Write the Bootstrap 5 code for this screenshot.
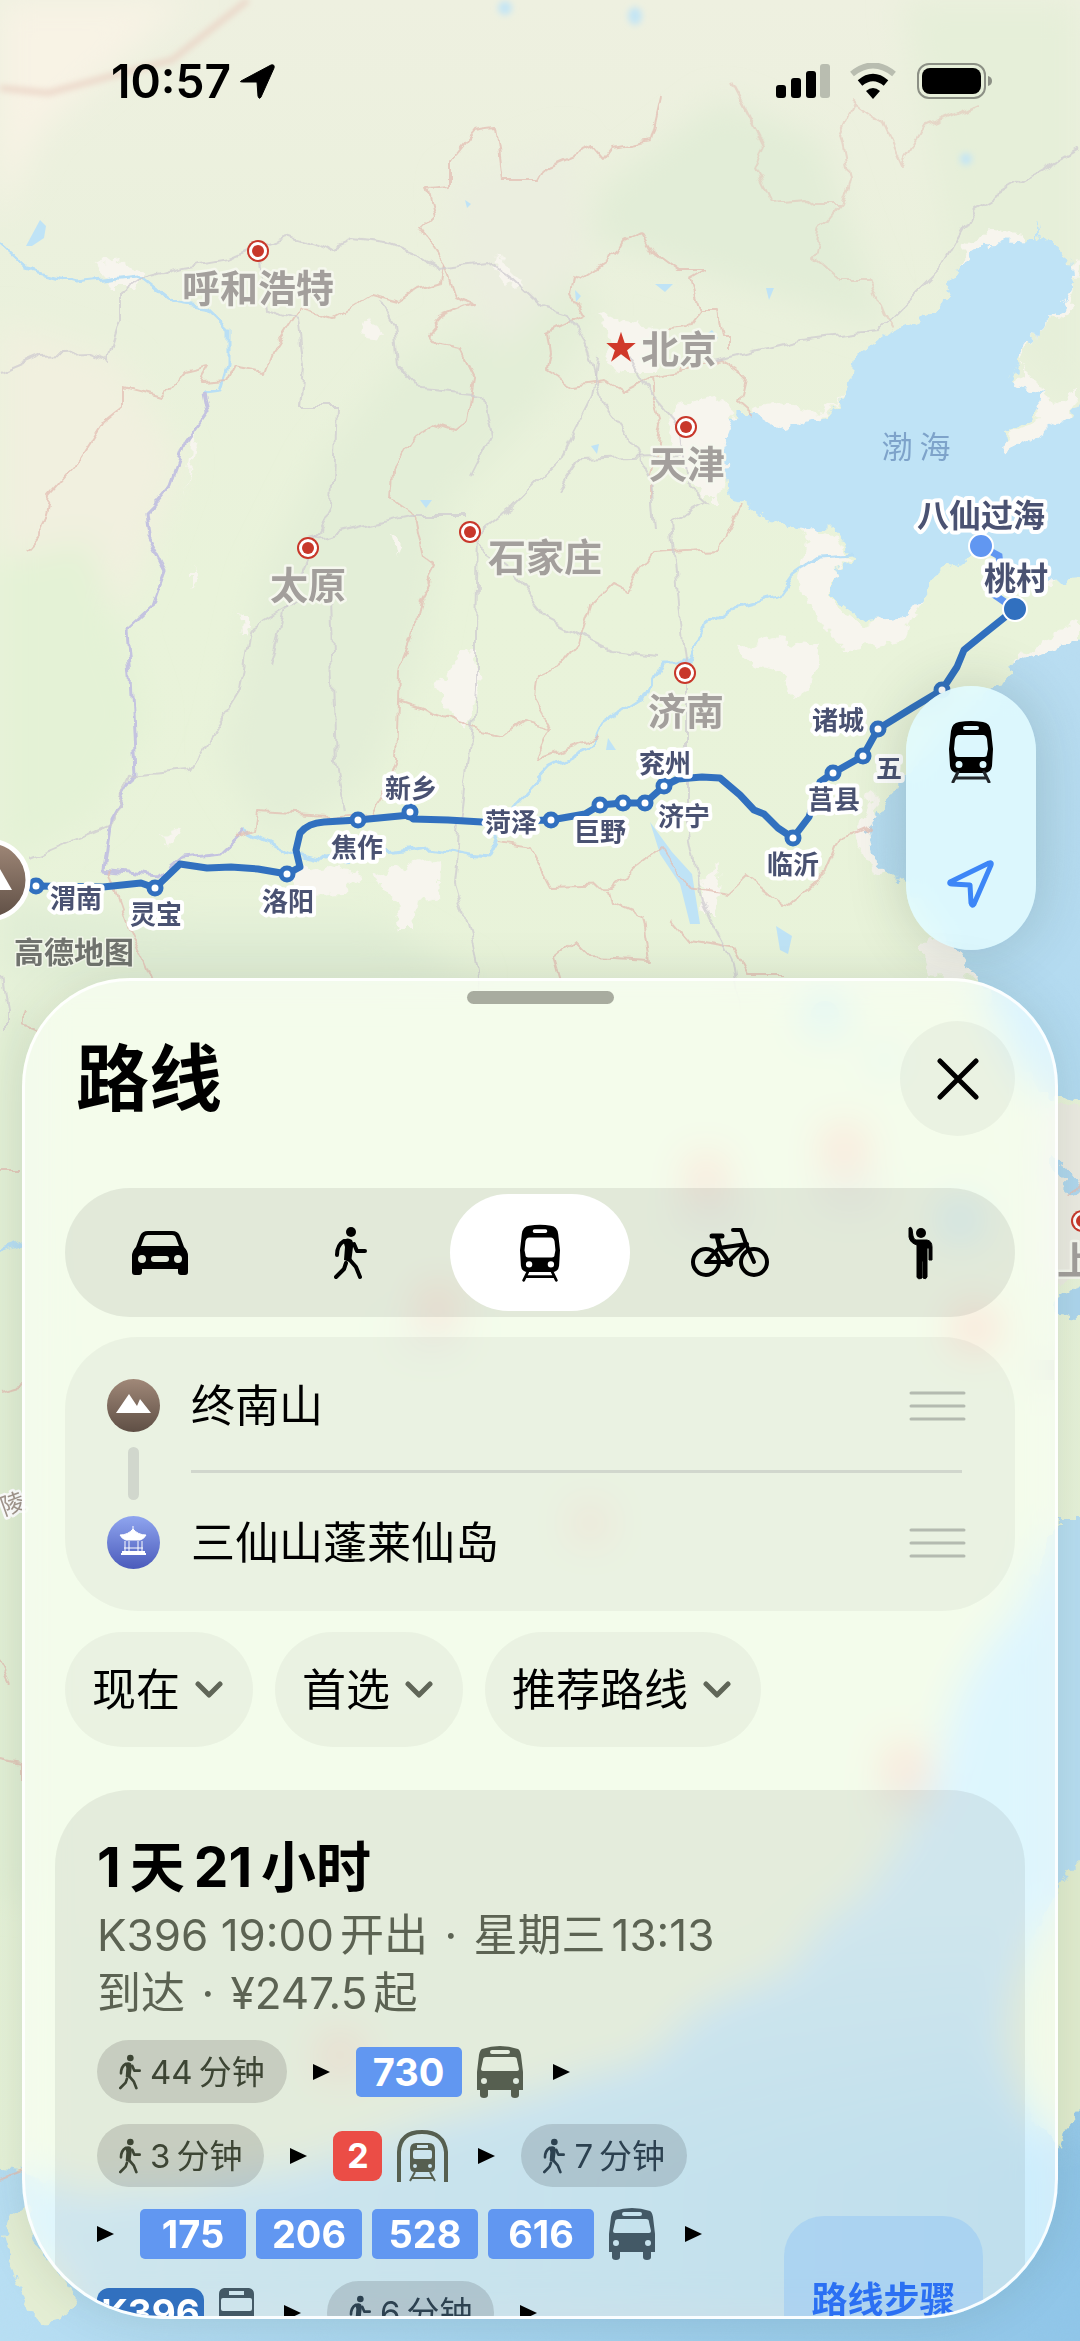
<!DOCTYPE html>
<html lang="zh-CN">
<head>
<meta charset="utf-8">
<meta name="viewport" content="width=device-width, initial-scale=1">
<title>路线</title>
<link href="https://cdn.jsdelivr.net/npm/bootstrap@5.3.0/dist/css/bootstrap.min.css" rel="stylesheet">
<style>
:root{--ink:#000;--blue:#2b70f3}
body{font-family:Inter,"Noto Sans CJK SC",sans-serif;color:var(--ink);background:#e9f3dc;margin:0}
.phone{height:100vh;min-height:1800px}
.map-canvas{position:absolute;left:0;top:0;width:100%;height:100%}
.map-canvas text{font-family:"Noto Sans CJK SC",sans-serif;text-anchor:middle;dominant-baseline:central;paint-order:stroke;stroke-linejoin:round}
.city{font-size:38px;font-weight:700;fill:#a39f9c;stroke:#f5f7ee;stroke-width:5px}
.stop{font-size:26px;font-weight:700;fill:#4a5272;stroke:#fff;stroke-width:8px}
.stop-end{font-size:32px}
.statusbar{padding:54px 88px 0 111px}
.clock{font-size:46px;line-height:54px;font-weight:600}
.map-tools{width:130px;height:264px;border-radius:65px;margin:0 44px 28px auto;background:rgba(226,252,255,.86);backdrop-filter:blur(14px);box-shadow:0 0 60px rgba(30,60,40,.2)}
.map-tools .btn{flex:1 1 0;padding:0;border:0}
.sheet{height:calc(100vh - 1000px);margin:0 22px 22px;padding:10px 40px 0;border:3px solid rgba(255,255,255,.85);border-radius:108px 108px 140px 140px;background:rgba(252,255,252,.66);backdrop-filter:blur(20px) saturate(1.7);box-shadow:0 0 50px rgba(30,60,40,.13);overflow:hidden}
.grabber{width:147px;height:13px;border-radius:7px;background:#a8ac9f;margin-bottom:17px}
.sheet-title{font-size:73px;line-height:100px;font-weight:700;margin:0 0 0 11px}
.close-btn{width:115px;height:115px;border-radius:50%;padding:0;background:rgba(0,0,0,.04);border:0}
.modes{height:129px;border-radius:65px;background:rgba(0,0,0,.075);padding:6px 0;margin:52px 0 20px}
.modes .btn{flex:1 1 0;border:0;border-radius:59px!important;display:flex;align-items:center;justify-content:center;color:#000;margin:0 5px!important;padding:0}
.modes .btn-check:checked+.btn{background:#fff;color:#000}
.soft-card{background:rgba(0,0,0,.04);border-radius:72px;padding:0 49px 0 42px}
.place-row{height:137px}
.place-row .pin{width:53px;height:53px;margin-right:31px}
.place-name{font-size:44px;line-height:60px}
.rail{width:11px;height:53px;border-radius:6px;background:#d1d7cd;left:63px;top:110px}
.rule{height:3px;background:#d1d7cd;left:126px;right:53px;top:133px}
.pill-select{width:auto;height:115px;border:0;border-radius:58px;font-size:44px;line-height:60px;color:#000;padding:0 73px 0 27px;background-color:rgba(0,0,0,.04);background-image:url("data:image/svg+xml,%3Csvg xmlns='http://www.w3.org/2000/svg' viewBox='0 0 28 18'%3E%3Cpath d='M3 3l11 11L25 3' fill='none' stroke='%23606658' stroke-width='5' stroke-linecap='round' stroke-linejoin='round'/%3E%3C/svg%3E");background-size:28px 18px;background-position:right 30px center;background-repeat:no-repeat}
.pills{gap:22px;margin-top:21px}
.trip{margin:43px -10px 0;height:760px;border-radius:76px;background:rgba(0,0,0,.062);padding:42px 42px 0}
.trip-title{font-size:55px;line-height:70px;font-weight:700;margin:0}
.trip-title .n{margin-right:9px}.trip-title .m{margin:0 9px}
.trip-sub{font-size:44px;line-height:58px;color:#5c6353;margin:4px 0 18px}
.trip-sub .n{margin-right:6px}.trip-sub .m{margin-left:6px}.trip-sub .dot{margin:0 4px}
.legs{width:620px;column-gap:26px;row-gap:21px}
.walk{height:63px;border-radius:32px;background:rgba(0,0,0,.13);padding:0 22px;font-size:33px;line-height:48px;color:#3d4534;gap:9px}
.walk .n{margin-right:6px}
.walk.sea{color:#2c4150}
.ride{gap:15px;color:#565f50;margin-right:4px}
.ride.sea{color:#435966}
.lines{gap:10px}
.line-tag{height:50px;width:106px;border-radius:5px;background:#6197f1;color:#fff;font-size:38px;line-height:50px;font-weight:700;text-align:center}
.metro{width:49px;border-radius:9px;background:#eb4d46;font-size:34px}
.rail-tag{width:107px;border-radius:12px;background:#3170bf;font-size:37px}
.steps-btn{width:199px;height:168px;border:0;border-radius:40px;background:rgba(110,180,250,.28);color:var(--blue);font-size:36px;font-weight:700;padding:0;margin-top:384px}
</style>
<script src="https://cdn.jsdelivr.net/npm/bootstrap@5.3.0/dist/js/bootstrap.bundle.min.js"></script>
</head>
<body>
<!-- shared icons -->
<svg width="0" height="0" class="position-absolute" aria-hidden="true">
  <symbol id="i-walk" viewBox="0 0 33 52"><circle cx="17" cy="5" r="5"/><path d="M9 13q5-3 9 0 2 3 1 7l-1 8q0 4-2 7l-6-2 1-13z"/><path d="M10 14q-7 4-7 14M20 17l3 7h8M12 36l-2 6-8 8M15 32l7 8 4 10" fill="none" stroke="currentColor" stroke-width="4" stroke-linecap="round" stroke-linejoin="round"/></symbol>
  <symbol id="i-train" viewBox="0 0 44 62"><path fill-rule="evenodd" d="M10 1Q22-1 34 1q7 1 8 9l2 18-1 17q-1 7-8 7H9q-7 0-8-7L0 28 2 10q1-8 8-9zM16 5q-2 0-2 2t2 2h12q2 0 2-2t-2-2zM10 14q-3 0-4 4L5 28l1 5q0 3 3 3h26q3 0 3-3l1-5-1-10q-1-4-4-4zM10 40a3.500 3.500 0 1 0 0 7 3.500 3.500 0 0 0 0-7zM34 40a3.500 3.500 0 1 0 0 7 3.500 3.500 0 0 0 0-7z"/><path d="M9 51L4 61M35 51l5 10M7 57h30" fill="none" stroke="currentColor" stroke-width="3" stroke-linecap="round"/></symbol>
  <symbol id="i-bus" viewBox="0 0 46 52"><path fill-rule="evenodd" d="M5 3Q23-3 41 3q2 1 3 6l2 17v18h-4v5q0 3-4 3t-4-3v-5H11v5q0 3-4 3t-4-3v-5H0V26L2 9q1-5 3-6zM15 4q-2 0-2 2t2 2h16q2 0 2-2t-2-2zM9 11q-3 0-3 3L4 23q0 2 2 2h34q2 0 2-2l-2-9q0-3-3-3zM7 32a3 3 0 1 0 0 6 3 3 0 0 0 0-6zM39 32a3 3 0 1 0 0 6 3 3 0 0 0 0-6z"/></symbol>
  <symbol id="i-tunnel" viewBox="0 0 51 52"><path d="M2 52V22Q3 2 25 2t24 20v30" fill="none" stroke="currentColor" stroke-width="4"/><path fill-rule="evenodd" d="M19 13h13q6 0 6 7v17q0 5-5 5H18q-5 0-5-5V20q0-7 6-7zM20 15v3h11v-3zM18 20q-2 0-2 2v5q0 2 2 2h15q2 0 2-2v-5q0-2-2-2zM18 34a2 2 0 1 0 0 4 2 2 0 0 0 0-4zM33 34a2 2 0 1 0 0 4 2 2 0 0 0 0-4z"/><path d="M18 42l-5 9M33 42l5 9M15 48h21" fill="none" stroke="currentColor" stroke-width="2"/></symbol>
  <symbol id="i-rail" viewBox="0 0 35 50"><path fill-rule="evenodd" d="M5 0h25q5 1 5 6v30q0 5-5 5H5q-5 0-5-5V6q0-5 5-6zM10 3v4h15V3zM4 10q-2 0-2 2v9q0 2 2 2h27q2 0 2-2v-9q0-2-2-2zM8 30a3 3 0 1 0 0 6 3 3 0 0 0 0-6zM27 30a3 3 0 1 0 0 6 3 3 0 0 0 0-6z"/></symbol>
  <symbol id="i-play" viewBox="0 0 17 16"><path d="M0 0l17 8-17 8z"/></symbol>
  <symbol id="i-drag" viewBox="0 0 57 30"><path d="M2 2h53M2 15h53M2 28h53" fill="none" stroke="#b4bab0" stroke-width="3" stroke-linecap="round"/></symbol>
</svg>

<main class="phone position-relative overflow-hidden d-flex flex-column">
<svg class="map-canvas" viewBox="0 0 1080 2341" preserveAspectRatio="xMidYMin slice" role="img" aria-label="地图">
  <defs>
    <linearGradient id="land" x1="0" y1="0" x2="0" y2="1"><stop offset="0" stop-color="#eef0e0"/><stop offset=".14" stop-color="#eaf1dc"/><stop offset=".25" stop-color="#e9f3da"/><stop offset="1" stop-color="#e6f2d8"/></linearGradient>
    <linearGradient id="deep" x1="0" y1="0" x2="0" y2="1"><stop offset="0" stop-color="#b9ddf1"/><stop offset="1" stop-color="#b2daf0"/></linearGradient>
    <linearGradient id="sea2" x1="0" y1="1" x2="1" y2="1"><stop offset="0" stop-color="#b9dff3"/><stop offset="1" stop-color="#8fc5e8"/></linearGradient>
    <linearGradient id="sea3" x1="0" y1="0" x2="0" y2="1"><stop offset="0" stop-color="#b8def2"/><stop offset=".6" stop-color="#b8def2"/><stop offset="1" stop-color="#b8def2" stop-opacity="0"/></linearGradient>
    <linearGradient id="brown" x1="0" y1="0" x2="0" y2="1"><stop offset="0" stop-color="#a08878"/><stop offset="1" stop-color="#5f4f45"/></linearGradient>
    <filter id="soft" x="-20%" y="-20%" width="140%" height="140%"><feGaussianBlur stdDeviation="16"/></filter>
    <filter id="haze" x="-20%" y="-20%" width="140%" height="140%"><feGaussianBlur stdDeviation="3"/></filter>
    <filter id="coast" x="-5%" y="-5%" width="110%" height="110%"><feTurbulence type="fractalNoise" baseFrequency=".07" numOctaves="3" seed="4"/><feDisplacementMap in="SourceGraphic" scale="18" xChannelSelector="R" yChannelSelector="G"/></filter>
    <filter id="wiggle" x="-5%" y="-5%" width="110%" height="110%"><feTurbulence type="fractalNoise" baseFrequency=".05" numOctaves="2" seed="9"/><feDisplacementMap in="SourceGraphic" scale="14" xChannelSelector="R" yChannelSelector="G"/></filter>
    <g id="cap"><circle r="11" fill="#c8372a"/><circle r="9" fill="#fff"/><circle r="6" fill="#c8372a"/></g>
    <g id="st"><circle r="6" fill="#fff" stroke="#3170bf" stroke-width="5"/></g>
  </defs>
  <rect width="1080" height="2341" fill="url(#land)"/>
  <!-- relief -->
  <g filter="url(#soft)">
    <path d="M0 0h190L40 130 0 220z" fill="#f8f3e5"/>
    <path d="M0 320l120 40 60 100-40 110-60 140-80 0z" fill="#f1f0df"/>
    <path d="M600 190l120-90 100 40 30 90 40 100-130-40-100-30-70-20z" fill="#e2edd7"/>
    <path d="M560 250l40 60-60 100-90 90-30 160-50 120-100 60-50-80 40-180 60-120 80-100 90-40z" fill="#e3eed7"/>
    <path d="M0 560l90-20 60 180-50 90-100 60z" fill="#e4f2d6"/>
    <path d="M0 900l180 20 200 0 100 60H0z" fill="#e0edd5"/>
    <path d="M0 1000h30v900H0z" fill="#dfedd3"/>
    <path d="M900 0h180v420l-120-120z" fill="#e6efd9"/>
    <path d="M450 180l120-40 20 120-90 90-40-60z" fill="#ebeedf"/>
  </g>
  <g fill="#f7f5ee" filter="url(#coast)">
    <path d="M92 262l30-4 22 16-8 14-22 0zM598 312l20 10 30 6 22 20-12 24-40 0-14-10 8-24zM370 316l14 22-20-2zM498 252l8 18 16 16-10 2-16-20zM720 396l-44 8-8 30 16 30 22 36 14 0 10-40 20-20z"/>
    <path d="M436 690l24-36 14-4 6 50-16 32-14-20zM374 878l50-20 16 10-2 30-20 6-6 28-12 0-4-30zM290 872l40-6 30 6-20 22-40 4zM736 650l40-12 46 10-6 30-24 18-14-26-30-6zM240 614l10 10-6 12zM394 536l8 8-4 12zM192 568l6 10-6 10zM160 835l18-6-8 20zM700 880l20-14-4 50-12 0zM186 494l8-60 4 2z"/>
    <path d="M744 500l70 24 24 14 14 22-20 14 0 30 28 22 30-6 20-20 12-34 14-10-14 40-16 44-60 10-20-22-30-50 14-40-30-26-40-10z"/>
    <path d="M1080 570l-38 14-20-10 10 20zM1080 620l-60 34-16 38 30-20 46-24zM874 790l-20 46 22 40 10-4-8-40zM920 944l40-20 26 40-10 14-50-4z"/>
    <path d="M964 248l24-16 36 4-6 12-36-2-22 42zM850 390l-30 24-50-10-20 6 36 24 30-10z"/>
    <path d="M1080 250l-12 60-46 36 0 30-16 10 20 12 14 20-30 14-10 34 14 6 40-40 26-30 0-12-30 16-10-20-20-20 14-40 24-30z"/>
  </g>
  <!-- sea -->
  <g filter="url(#coast)">
  <path fill="#bfe3f6" d="M730 500l-7-50 14-37 20 0 28 17 41-12 24-28 4-33 34-24 52-23 10-30 21-27 17-11 31 1 19-8 0-16 3 18 30 23 3 23-20 37-28 23-7 20-10 20 34 10-10 24-28 16 4 20 31-20 60-36V577l-67 6-48-36-21 13-24 10-17 27-21 23-38 3-31-23 0-27 24-13-24-33-27 3-42-10-20-17z"/>
  <path fill="url(#deep)" d="M1100 632l-81 28-20 27-35 20-62 73-34 50 7 33 27 20 50 60 26 37 60 113 62 14z"/>
  <path fill="#aed6ee" d="M1056 1296l44-14v38l-42-6z"/>
  <path fill="#ecebe2" d="M1040 1100l60 17v150l-60 20z"/>
  <path fill="#b0d7ee" d="M1050 1155l14 10 16 24 20 0v16l-30-14-20-24z"/>
  <path fill="url(#sea2)" d="M1100 1520l-40 0-40 90-60 80-30 110-60 90-40 30-40 50-90 40-50 50-170 50-180 60-120 20-60 0-30 10-70-30-60-6v197h1140z"/>
  <path fill="url(#sea3)" d="M1100 1520l-40 0-40 90-60 80-30 110-60 90-40 30-40 50-90 40-50 50-170 50-180 60h800z"/>
  <path fill="#e4eed4" d="M24 2205l-14 11-8 22 18 54 21 32 24-7 14-18-27-36-18-21-4-28z"/>
  <path fill="#e2edcf" d="M1100 1840l-38 40-30 60-22 50-6 60 16 50 40 50 4-20 16-18 20-20z"/>
  </g>
  <path fill="#bfe3f6" d="M40 220l6 6-2 12-12 8-6 0zM465 200l6 4-4 4zM655 284l18 0-8 8zM575 290l6 6-5 6zM704 336l8-6 6 8-8 6zM766 288l8 0-5 12zM591 446l8-2-2 10zM420 500l12 0-6 8zM608 738l8 12-10 0zM650 822l22 30 20 22 8 50-10 0-10-40-20-30zM776 926l16 10-4 18-8-4z"/>
  <g fill="#c4e5f4" filter="url(#haze)"><circle cx="505" cy="8" r="7"/><ellipse cx="635" cy="16" rx="7" ry="9"/><circle cx="966" cy="159" r="6"/></g>
  <!-- rivers -->
  <g fill="none" stroke="#b9dff5" stroke-width="3" stroke-linejoin="round" filter="url(#wiggle)">
    <path d="M0 245l28 25 48 12 62-7 34 27 35 6 20 19v40l-7 23-17 2"/>
    <path d="M244 830l38 20 42 10 69-7 34-5 59 9 27-50 38-40 41-20 11-24 41-26 17-34 28 0 13-33 28-20 48-13 14-20 28-20 34-2"/>
    <path d="M0 1250l24-8"/>
  </g>
  <path d="M203 392l4 21-21 30-14 40-14 17-13 13 3 24 17 33-13 37-25 23 4 47 5 96-26 47-7 50 55 7 24-20 38-4 24-23" fill="none" stroke="#c4c3e0" stroke-width="3" filter="url(#wiggle)"/>
  <!-- provincial borders -->
  <path filter="url(#haze)" d="M248 0l-76 60-124 33-48-5" fill="none" stroke="#ead2c4" stroke-width="5"/>
  <g fill="none" stroke="#e3bdb3" stroke-width="2" stroke-opacity=".75" stroke-linejoin="round" filter="url(#wiggle)">
    <path d="M730 80l17 33 17 34-10 20 17 36 35-3 7 5h27l-20 25-7 27 27 23h28l14 33 12 19M840 205l9-28-9-44 14-30 28 20 19 42 22-38 55-24" stroke-opacity=".5"/>
    <path d="M661 97l-10 43-38 7-10 13-11-13-48 20-7 13h-34l-7-53-21 3-24 30v28l-24 2 7 27-14 13 24 33 11 34 17 8-31 12-14 16 10 12 23 5 15 30-7 40-13 10-21-7-21 14-20 33-2 30 24 17 9 40 13 10-17 33-7 37-14 36-1 27-2 60-10 30-14 23-41 4-73-4-3 17-21 7"/>
    <path d="M640 232l11 18 27 20h28l-17 10 10 33-10 14-28 3M699 313h18l4 24h8v12M640 232l-17 8-7 13-41 27-3 13 13 22-37 18 3 20-3 17 24 15 34-5 17 12 28-15 31-5 4-25M651 377l2 24 9 26-10 50 0 24M682 372l40-12 22 16-6 26 16 14"/>
    <path d="M444 263l-3 20-24 7-18 12-27-7-21 13-17 10-34-10-25 39-10 26-31-6-7 13-24 2-2 0 8-14-25 6-22 25-14-4-24-6 0 18-20 16-24 38-30 34-10 40-14 16"/>
    <path d="M744 503l-24 45-66 4-27 38-14-7-21 20-13 40-14 17-28 13-3 24 17 30-28-7-20 15-28-7-48-18-28-10M551 727l-14 33 62-23"/>
    <path d="M496 842l34 5 21 40 62-2 48-38 28 40 41 6 17-16 38 30 41-34 14-33 31-13M610 887l3 16 31 14 7 43-59-3-17-17-21 17 7 24M672 920l17 20 44 7 14 26h38M110 870l20 60 14 30 8 20M0 1170h22M28 1010l-5 14 14 6M1080 1180l-10 16"/>
    <path d="M0 1390l22-6M0 1660l10 20M0 1758l22 4v20M0 2180l22-8"/>
  </g>
  <!-- trunk roads -->
  <g fill="none" stroke="#cfcbd0" stroke-width="2" stroke-opacity=".75" filter="url(#wiggle)">
    <path d="M0 372l40-17 48-2 20 8 12-40 0-28 20-14 42-12 48-8 28-12 30-9 36 12 28-12 34 4 30 12 22 14 50-6 24 16 30 28 26 8 20 34 14 54 26 34 24 44 4 50M258 250l10 58 30 10 6 50-4 38 36 0-4 100-20 40-26 60-16 60M710 362l90-22 80-10 60-60 34-60 50-30 56-30"/>
    <path d="M598 357l-6 40-30 60-50 50-34 26-2 100 0 60-16 130-6 60 18 60 10 60M621 347l24 40 34 40 8 60 18 16-34 20 16 160 0 140 16 80 30 60 10 60M470 540l40 30 40 50 60 30 50 5M308 540l100-24 60 0M300 600l-50 30-10 60-50 80-60 6-20 50-80 34M330 600l6 160 10 50M560 490l20-30 100-4M0 970l6 40v20M380 300l14 24 4 40 24 26 60 6 8 40-20 40"/>
  </g>
  <!-- cities -->
  <g class="city" transform="translate(0 -3)">
    <text x="258" y="288">呼和浩特</text><text x="679" y="349">北京</text><text x="687" y="464">天津</text>
    <text x="308" y="585">太原</text><text x="545" y="557">石家庄</text><text x="686" y="711">济南</text><text x="1076" y="1260">上</text>
    <g font-size="31" fill="#7ea3ca" stroke="none"><text x="897" y="447" style="font-weight:400">渤</text><text x="935" y="447" style="font-weight:400">海</text></g>
  </g>
  <text x="12" y="1502" font-size="24" fill="#a3968e" stroke="#fff" stroke-width="5" transform="rotate(-20 12 1502)">陵</text>
  <use href="#cap" x="258" y="251"/><use href="#cap" x="686" y="427"/><use href="#cap" x="308" y="548"/><use href="#cap" x="470" y="532"/><use href="#cap" x="685" y="673"/><use href="#cap" x="1082" y="1221"/>
  <path d="M621 335l3 9h9l-7 6 3 9-8-6-8 6 3-9-7-6h9z" fill="#d0392a" stroke="#d0392a" stroke-width="2"/>
  <g fill="#e07a70" fill-opacity=".6"><circle cx="706" cy="1175" r="18"/><circle cx="844" cy="1148" r="20"/><circle cx="438" cy="1305" r="18"/><circle cx="975" cy="1328" r="22"/><circle cx="905" cy="1765" r="20"/><circle cx="340" cy="2055" r="18"/><circle cx="590" cy="1523" r="14"/></g>
  <g fill="#b4aeb2" fill-opacity=".55"><path d="M680 1200h64v24h-64zM820 1180h60v24h-60zM880 1785h60v24h-60zM400 1330h60v16h-60zM1030 1360h24v20h-24z"/></g>
  <g fill="#8cc8ef"><circle cx="825" cy="1015" r="14"/><circle cx="885" cy="1060" r="8"/><circle cx="960" cy="1220" r="16"/></g>
  <!-- itinerary -->
  <path d="M981 546l18 10 2 18-8 20 22 15" fill="none" stroke="#6197f1" stroke-width="7"/>
  <path d="M36 886l67 1 38-4 14 5 25-24 27 4 24-1 27 2 29 5 13-7-4-17 4-17q8-10 24-11l34-2 52-5 3 4 35 1 34 2 69-2 34-6 15-9 23-2h22l19-17 14-7 24-2 18 1 20 17 14 15 10 4 14 14 15 10 16-21 11-35 13-9 30-17 15-27 34-21 30-18 15-23 7-17 21-17 30-24" fill="none" stroke="#3170bf" stroke-width="7" stroke-linejoin="round"/>
  <use href="#st" x="36" y="886"/><use href="#st" x="155" y="888"/><use href="#st" x="287" y="874"/><use href="#st" x="358" y="820"/><use href="#st" x="410" y="812"/><use href="#st" x="551" y="820"/><use href="#st" x="600" y="805"/><use href="#st" x="623" y="803"/><use href="#st" x="645" y="803"/><use href="#st" x="664" y="786"/><use href="#st" x="793" y="838"/><use href="#st" x="833" y="773"/><use href="#st" x="863" y="756"/><use href="#st" x="878" y="729"/><use href="#st" x="942" y="690"/>
  <g class="stop" transform="translate(0 -2)">
    <text x="76" y="898">渭南</text><text x="156" y="914">灵宝</text><text x="288" y="901">洛阳</text><text x="357" y="847">焦作</text><text x="411" y="788">新乡</text><text x="511" y="822">菏泽</text><text x="600" y="831">巨野</text><text x="684" y="816">济宁</text><text x="665" y="763">兖州</text><text x="793" y="864">临沂</text><text x="834" y="799">莒县</text><text x="889" y="768">五</text><text x="838" y="720">诸城</text>
    <text class="stop-end" x="981" y="515">八仙过海</text><text class="stop-end" x="1016" y="578">桃村</text>
  </g>
  <circle cx="981" cy="546" r="12" fill="#6197f1" stroke="#fff" stroke-width="2"/><circle cx="1015" cy="609" r="12" fill="#3170bf" stroke="#fff" stroke-width="2"/>
  <circle cx="-11" cy="880" r="39" fill="url(#brown)" stroke="#fff" stroke-width="5"/><path d="M-30 890l26-28 16 28z" fill="#fff"/>
  <text x="74" y="950" font-size="30" font-weight="700" fill="#70736e" stroke="#f2f6ea" stroke-width="3">高德地图</text>
</svg>

<header class="statusbar position-relative d-flex justify-content-between align-items-center">
  <div class="d-flex align-items-center gap-2"><span class="clock">10:57</span>
    <svg width="36" height="36" viewBox="0 0 36 36"><path d="M2 18L32 2q4-1 3 3L22 34q-2 3-3-1l-1-14H4q-4 0-2-1z" stroke="#000" stroke-linejoin="round"/></svg></div>
  <svg width="216" height="36" viewBox="0 0 216 36">
      <rect x="0" y="22" width="10" height="13" rx="3"/><rect x="15" y="15" width="10" height="20" rx="3"/><rect x="30" y="8" width="10" height="27" rx="3"/><rect x="44" y="1" width="10" height="34" rx="3" fill="#b9bdb0"/>
      <path d="M76 11q21-17 42 0" fill="none" stroke="#b9bdb0" stroke-width="6"/><path d="M84 20q13-11 26 0" fill="none" stroke="#000" stroke-width="7"/><path d="M90 28q7-6 14 0l-7 8z"/>
      <rect x="142" y="1" width="67" height="34" rx="11" fill="none" stroke="#8c9085" stroke-width="2"/><rect x="146" y="5" width="59" height="26" rx="8"/><path d="M212 13q4 1 4 5t-4 5z" fill="#8c9085"/>
  </svg>
</header>

<div class="flex-grow-1 d-flex align-items-end position-relative">
  <div class="map-tools d-flex flex-column">
    <button class="btn" type="button" aria-label="公共交通地图"><svg width="44" height="62"><use href="#i-train"/></svg></button>
    <button class="btn" type="button" aria-label="当前位置"><svg width="48" height="48" viewBox="0 0 48 48"><path d="M3 22L42 3q3-1 2 2L27 44q-2 3-3-1L23 25 5 24q-3 0-2-2z" fill="none" stroke="#3d86f7" stroke-width="5" stroke-linejoin="round"/></svg></button>
  </div>
</div>

<section class="sheet position-relative flex-shrink-0" aria-label="路线">
  <div class="grabber mx-auto"></div>
  <div class="d-flex justify-content-between align-items-center">
    <h1 class="sheet-title">路线</h1>
    <button class="btn close-btn" type="button" aria-label="关闭"><svg width="42" height="42" viewBox="0 0 42 42"><path d="M3 3l36 36M39 3L3 39" stroke="#000" stroke-width="5" stroke-linecap="round"/></svg></button>
  </div>

  <div class="modes d-flex" role="group" aria-label="出行方式">
    <input class="btn-check" type="radio" name="mode" id="m1"><label class="btn" for="m1" aria-label="驾车"><svg width="56" height="44" viewBox="0 0 56 44"><path fill-rule="evenodd" d="M16 0h24q6 0 8 5l4 11q4 4 4 9v16q0 3-3 3h-4q-3 0-3-3v-3H10v3q0 3-3 3H3q-3 0-3-3V25q0-5 4-9L8 5q2-5 8-5zM16 4q-3 0-4 3L9 15h38L44 7q-1-3-4-3zM10 24a4 4 0 1 0 0 8 4 4 0 0 0 0-8zM46 24a4 4 0 1 0 0 8 4 4 0 0 0 0-8zM22 25a3 3 0 0 0 0 6h12a3 3 0 0 0 0-6z"/></svg></label>
    <input class="btn-check" type="radio" name="mode" id="m2"><label class="btn" for="m2" aria-label="步行"><svg width="33" height="54"><use href="#i-walk"/></svg></label>
    <input class="btn-check" type="radio" name="mode" id="m3" checked><label class="btn" for="m3" aria-label="公交"><svg width="40" height="58"><use href="#i-train"/></svg></label>
    <input class="btn-check" type="radio" name="mode" id="m4"><label class="btn" for="m4" aria-label="骑行"><svg width="78" height="49" viewBox="0 0 78 49" fill="none" stroke="#000" stroke-width="4" stroke-linecap="round" stroke-linejoin="round"><circle cx="15" cy="34" r="13"/><circle cx="63" cy="34" r="13"/><path d="M15 34l13-14 28-4M15 34h22l18-18M28 20l10 14" /><path d="M21 8h10M26 8l3 12" stroke-width="5"/><path d="M42 2h8l5 14 8 18"/><circle cx="38" cy="35" r="2"/></svg></label>
    <input class="btn-check" type="radio" name="mode" id="m5"><label class="btn" for="m5" aria-label="打车"><svg width="25" height="54" viewBox="0 0 25 52"><circle cx="13" cy="6" r="5"/><path d="M8 13h11q5 1 5 7v13h-3V21l-2 0v29q-1 3-4 1V34h-1v17q-4 2-5-1V18q-7-2-8-8V1q2-2 3 1l1 7q1 4 3 4z" stroke="#000" stroke-linejoin="round"/></svg></label>
  </div>

  <div class="soft-card position-relative">
    <div class="place-row d-flex align-items-center">
      <svg class="pin" viewBox="0 0 53 53"><circle cx="26.500" cy="26.500" r="26.500" fill="url(#brown)"/><path d="M9 34l13-19 8 12 3-7 11 14z" fill="#fff"/></svg>
      <span class="place-name flex-grow-1">终南山</span><svg width="57" height="30"><use href="#i-drag"/></svg>
    </div>
    <div class="place-row d-flex align-items-center">
      <svg class="pin" viewBox="0 0 53 53"><defs><linearGradient id="indigo" x1="0" y1="0" x2="0" y2="1"><stop offset="0" stop-color="#8fa5ef"/><stop offset="1" stop-color="#4b5bbb"/></linearGradient></defs><circle cx="26.500" cy="26.500" r="26.500" fill="url(#indigo)"/><path d="M26 10v4M13 19q8 0 13-6 5 6 13 6-2 4-6 5H19q-4-1-6-5z" fill="#fff" stroke="#fff"/><path d="M18 25v10M22 25v10M31 25v10M35 25v10M17 32h19" stroke="#fff"/><path d="M15 36h23M14 38h25" stroke="#fff" stroke-width="2"/></svg>
      <span class="place-name flex-grow-1">三仙山蓬莱仙岛</span><svg width="57" height="30"><use href="#i-drag"/></svg>
    </div>
    <span class="rail position-absolute"></span><span class="rule position-absolute"></span>
  </div>

  <div class="pills d-flex">
    <select class="pill-select form-select" aria-label="时间"><option>现在</option></select>
    <select class="pill-select form-select" aria-label="偏好"><option>首选</option></select>
    <select class="pill-select form-select" aria-label="排序"><option>推荐路线</option></select>
  </div>

  <article class="trip d-flex justify-content-between align-items-start">
    <div>
      <h2 class="trip-title"><span class="n">1</span>天<span class="m">21</span>小时</h2>
      <p class="trip-sub text-nowrap">K396 <span class="n">19:00</span>开出 <span class="dot">·</span> 星期三<span class="m">13:13</span><br>到达 <span class="dot">·</span> <span class="n">¥247.5</span>起</p>
      <div class="legs d-flex flex-wrap align-items-center">
        <span class="walk d-flex align-items-center"><svg width="22" height="36" fill="currentColor"><use href="#i-walk"/></svg><span><span class="n">44</span>分钟</span></span>
        <svg width="17" height="16"><use href="#i-play"/></svg>
        <span class="ride d-flex align-items-center"><span class="line-tag">730</span><svg width="46" height="52" fill="currentColor"><use href="#i-bus"/></svg></span>
        <svg width="17" height="16"><use href="#i-play"/></svg>
        <span class="walk d-flex align-items-center"><svg width="22" height="36" fill="currentColor"><use href="#i-walk"/></svg><span><span class="n">3</span>分钟</span></span>
        <svg width="17" height="16"><use href="#i-play"/></svg>
        <span class="ride d-flex align-items-center"><span class="line-tag metro">2</span><svg width="51" height="52" fill="currentColor"><use href="#i-tunnel"/></svg></span>
        <svg width="17" height="16"><use href="#i-play"/></svg>
        <span class="walk sea d-flex align-items-center"><svg width="22" height="36" fill="currentColor"><use href="#i-walk"/></svg><span><span class="n">7</span>分钟</span></span>
        <svg width="17" height="16"><use href="#i-play"/></svg>
        <span class="ride sea d-flex align-items-center"><span class="lines d-flex"><span class="line-tag">175</span><span class="line-tag">206</span><span class="line-tag">528</span><span class="line-tag">616</span></span><svg width="46" height="52" fill="currentColor"><use href="#i-bus"/></svg></span>
        <svg width="17" height="16"><use href="#i-play"/></svg>
        <span class="ride sea d-flex align-items-center"><span class="line-tag rail-tag">K396</span><svg width="35" height="50" fill="currentColor"><use href="#i-rail"/></svg></span>
        <svg width="17" height="16"><use href="#i-play"/></svg>
        <span class="walk sea d-flex align-items-center"><svg width="22" height="36" fill="currentColor"><use href="#i-walk"/></svg><span><span class="n">6</span>分钟</span></span>
        <svg width="17" height="16"><use href="#i-play"/></svg>
      </div>
    </div>
    <button class="btn steps-btn flex-shrink-0" type="button">路线步骤</button>
  </article>
</section>
</main>
</body>
</html>
